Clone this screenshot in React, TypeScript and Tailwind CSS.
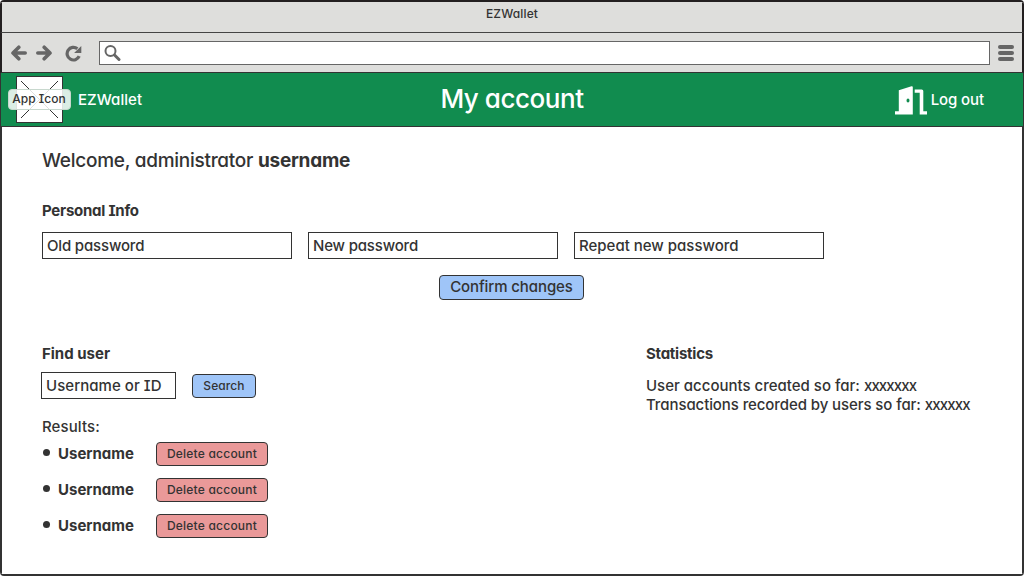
import React from "react";

const font =
  "font-['Inter','Noto_Sans',sans-serif] font-medium [font-feature-settings:'cv11','cv08','kern'] whitespace-nowrap";

function Field({ label, className }: { label: string; className: string }) {
  return (
    <div className={`h-[27px] shrink-0 border border-[#333] bg-white pl-1 text-[15px] leading-[25px] ${className}`}>
      {label}
    </div>
  );
}

function Button({ label, className }: { label: string; className: string }) {
  return (
    <button className={`shrink-0 rounded-[4px] border border-[#333] text-center ${className}`}>{label}</button>
  );
}

function ArrowIcon({ className = "" }: { className?: string }) {
  return (
    <svg width="16" height="16" viewBox="0 0 16 16" className={className} fill="none" stroke="#666" strokeWidth="3.6" strokeLinecap="round" strokeLinejoin="round">
      <path d="M14.200 8H3M7.800 2.200 2 8l5.800 5.800" />
    </svg>
  );
}

function DoorIcon() {
  return (
    <svg width="32" height="29" viewBox="0 0 32 29" fill="#fff" className="mt-px">
      <path fillRule="evenodd" d="M0 25.300h3.800V4.200L16.500.2q1.300-.3 1.300 1V28.600H0zM13 12.600a1.500 1.900 0 1 0 0 3.800a1.500 1.900 0 1 0 0-3.800z" />
      <path d="M19.700 3.400h7q1.600 0 1.600 1.600v20.300H32v3.300h-7.300V6.800h-5z" />
    </svg>
  );
}

export default function App() {
  return (
    <div className={`flex h-[576px] w-[1024px] flex-col overflow-hidden rounded-[4px] border-y-2 border-t-[#231f20] border-b-[#333] bg-white text-[#333] ${font}`}>
      <div className="flex h-[31px] shrink-0 justify-center border-x-2 border-b border-x-[#231f20] border-b-[#444] bg-[#dededc] pt-[3px] text-[12px] leading-[18px] tracking-[0.15px]">
        <span>EZWallet</span>
      </div>
      <div className="flex h-[40px] shrink-0 items-center border-x-2 border-b border-x-[#231f20] border-b-[#333] bg-[#dededc] pl-[9px]">
        <ArrowIcon className="mt-px" />
        <ArrowIcon className="mt-px ml-[9px] rotate-180" />
        <svg width="17" height="17" viewBox="0 0 17 17" className="mt-px ml-[13px]" fill="none">
          <path d="M14.200 11.200A6.300 6.300 0 1 1 12.400 3.800" stroke="#666" strokeWidth="3.200" />
          <path d="M16.300 1v7H9.100z" fill="#666" />
        </svg>
        <div className="ml-[17px] flex h-[24px] w-[891px] items-center border border-[#666] bg-white pl-1">
          <svg width="17" height="17" viewBox="0 0 17 17" className="mt-[2px]" fill="none" stroke="#666">
            <circle cx="6.500" cy="6" r="5" strokeWidth="2" />
            <path d="M10.500 10 15 14.500" strokeWidth="3" strokeLinecap="round" />
          </svg>
        </div>
        <svg width="16" height="16" viewBox="0 0 16 16" className="mt-px ml-2" fill="#666">
          <rect width="16" height="4" rx="2" />
          <rect y="6" width="16" height="4" rx="2" />
          <rect y="12" width="16" height="4" rx="2" />
        </svg>
      </div>
      <header className="grid h-[54px] shrink-0 grid-cols-3 items-center border-x border-b border-[#333] bg-[#118c4f] text-white">
        <div className="flex items-center pl-[7px]">
          <div className="relative flex h-[47px] w-[63px] items-center justify-center">
            <svg width="47" height="47" viewBox="0 0 47 47">
              <rect x=".5" y=".5" width="46" height="46" fill="#fff" stroke="#333" />
              <path d="m5 5 37 37M42 5 5 42" stroke="#333" />
            </svg>
            <span className="absolute inset-x-0 top-[13px] h-[21px] rounded-[4px] border border-[#c8d8ce] bg-white/85 pr-px text-center text-[12px] leading-[18px] text-[#333]">App Icon</span>
          </div>
          <span className="mt-[2px] ml-[7px] text-[15px] tracking-[0.05px]">EZWallet</span>
        </div>
        <h1 className="-mt-[2px] text-center text-[26px] tracking-[-0.45px]">My account</h1>
        <div className="flex items-center justify-end pr-[39px] text-[15px]">
          <DoorIcon />
          <span className="mt-[2px] ml-[4px] tracking-[-0.1px]">Log out</span>
        </div>
      </header>
      <main className="flex min-h-0 flex-1 flex-col border-x-2 border-[#333] pl-[40px]">
        <p className="mt-[21px] h-[26px] text-[19px] leading-[26px] tracking-[-0.27px]">
          Welcome, administrator <b className="font-bold tracking-[-0.25px]">username</b>
        </p>
        <h2 className="mt-[27px] text-[15px] leading-[20px] font-bold tracking-[-0.25px]">Personal Info</h2>
        <div className="mt-[11px] flex gap-4">
          <Field label="Old password" className="w-[250px] tracking-[-0.17px]" />
          <Field label="New password" className="w-[250px] tracking-[-0.17px]" />
          <Field label="Repeat new password" className="w-[250px]" />
        </div>
        <Button label="Confirm changes" className="mt-[16px] ml-[397px] h-[25px] w-[145px] bg-[#9fc5f8] pb-[2px] text-[15px] leading-[21px] tracking-[-0.1px]" />
        <div className="mt-[44px] flex">
          <section className="w-[604px] shrink-0">
            <h2 className="text-[15px] leading-[20px] font-bold">Find user</h2>
            <div className="mt-[8px] -ml-px flex items-center">
              <Field label="Username or ID" className="w-[135px] tracking-[0.05px]" />
              <Button label="Search" className="ml-[16px] h-[24px] w-[64px] bg-[#9fc5f8] text-[12px] leading-[22px] tracking-[0.1px]" />
            </div>
            <p className="mt-[18px] text-[15px] leading-[20px] tracking-[0.1px]">Results:</p>
            <ul className="mt-[5px] flex flex-col gap-3">
              {[0, 1, 2].map((n) => (
                <li key={n} className="flex h-[24px] items-center">
                  <span className="mb-[3px] ml-[1px] size-[6.5px] rounded-full bg-[#333]" />
                  <b className="ml-[8.5px] w-[98px] text-[15px] font-bold">Username</b>
                  <Button label="Delete account" className="h-[24px] w-[112px] bg-[#ea9999] text-[12px] leading-[22px] tracking-[0.22px]" />
                </li>
              ))}
            </ul>
          </section>
          <section>
            <h2 className="text-[15px] leading-[20px] font-bold tracking-[-0.25px]">Statistics</h2>
            <div className="mt-[12px] text-[15px] leading-[19px]">
              <p>User accounts created so far: <span className="tracking-[-0.87px]">xxxxxxx</span></p>
              <p className="tracking-[-0.09px]">Transactions recorded by users so far: <span className="tracking-[-0.85px]">xxxxxx</span></p>
            </div>
          </section>
        </div>
      </main>
    </div>
  );
}
